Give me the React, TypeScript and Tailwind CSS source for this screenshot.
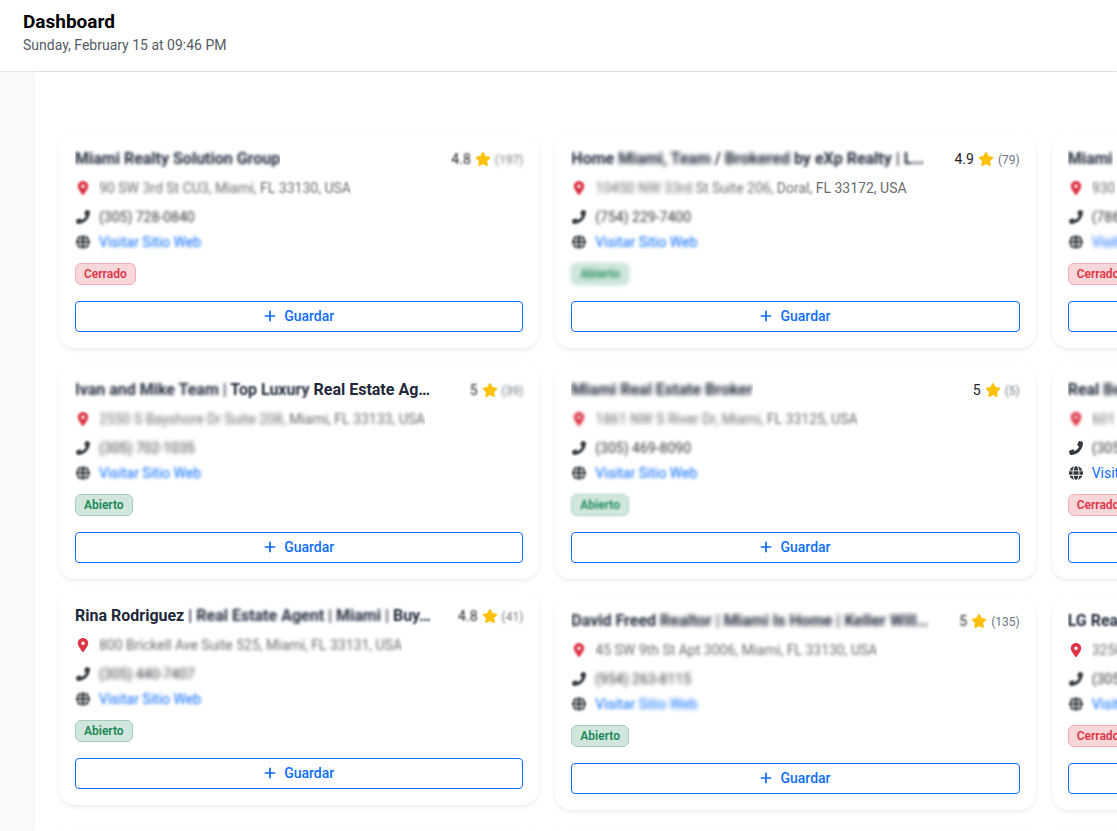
import clsx from 'clsx';
import type { ReactNode } from 'react';
import { FaGlobe, FaLocationDot, FaPhoneFlip, FaPlus, FaStar } from 'react-icons/fa6';

// 0 = sharp, 3 = fully hidden
type Level = 0 | 1 | 2 | 3;
type Part = [text: string, level: Level];

type Listing = {
  name: Part[];
  rating: Part;
  reviews: Part;
  address: Part[];
  phone: Part[];
  website: Part[];
  open: boolean;
  statusBlur?: Level;
  pinBlur?: Level;
  iconBlur?: Level;
  active?: boolean;
};

const listings: Listing[] = [
  {
    name: [['Miami Realty', 2], [' Solution', 2], [' Group', 2]],
    rating: ['4.8', 1],
    reviews: ['(197)', 2],
    address: [['90 SW 3rd St CU3, Miami,', 2], [' FL 33130, USA', 1]],
    phone: [['(305) 728-0840', 2]],
    website: [['Visitar Sitio Web', 2]],
    open: false,
    pinBlur: 1,
    iconBlur: 1,
  },
  {
    name: [['Home ', 2], ['Miami, Team', 3], [' / ', 2], ['Brokered', 3], [' by ', 2], ['eXp Realty | L…', 2]],
    rating: ['4.9', 0],
    reviews: ['(79)', 0],
    address: [['10450 NW 33rd', 3], [' St Suite 206,', 2], [' Doral,', 1], [' FL 33172, USA', 0]],
    phone: [['(754) 229-7400', 2]],
    website: [['Visitar Sitio Web', 2]],
    open: true,
    statusBlur: 3,
    pinBlur: 1,
    iconBlur: 1,
  },
  {
    name: [['Miami', 2]],
    rating: ['5', 0],
    reviews: ['(12)', 0],
    address: [['930', 2]],
    phone: [['(786)', 2]],
    website: [['Visitar Sitio Web', 3]],
    open: false,
    pinBlur: 1,
    iconBlur: 1,
  },
  {
    name: [['Ivan ', 2], ['and Mike Team | ', 2], ['Top Luxury', 1], [' Real Estate Ag…', 0]],
    rating: ['5', 1],
    reviews: ['(39)', 2],
    address: [['2550 S Bayshore Dr Suite 208,', 3], [' Miami,', 2], [' FL 33133, USA', 2]],
    phone: [['(305) 702-1035', 3]],
    website: [['Visitar Sitio Web', 2]],
    open: true,
    pinBlur: 1,
    iconBlur: 1,
  },
  {
    name: [['Miami Real Estate', 3], [' Broker', 3]],
    rating: ['5', 0],
    reviews: ['(5)', 1],
    address: [['1861 NW S River Dr,', 3], [' Miami,', 3], [' FL 33125, USA', 2]],
    phone: [['(305) 469-8090', 2]],
    website: [['Visitar Sitio Web', 2]],
    open: true,
    statusBlur: 1,
    pinBlur: 2,
    iconBlur: 1,
  },
  {
    name: [['Real ', 2], ['Best', 3]],
    rating: ['5', 0],
    reviews: ['(20)', 0],
    address: [['601', 3]],
    phone: [['(305)', 2]],
    website: [['Visitar Sitio Web', 0]],
    open: false,
    pinBlur: 2,
    iconBlur: 0,
  },
  {
    name: [['Rina Rodriguez ', 0], ['| ', 1], ['Real Estate', 2], [' Agent |', 2], [' Miami |', 2], [' Buy…', 1]],
    rating: ['4.8', 1],
    reviews: ['(41)', 1],
    address: [['800 Brickell Ave Suite 525,', 2], [' Miami, FL 33131, USA', 2]],
    phone: [['(305) 440-7407', 3]],
    website: [['Visitar Sitio Web', 2]],
    open: true,
    iconBlur: 1,
    active: true,
  },
  {
    name: [['David Freed ', 2], ['Realtor | Miami Is Home |', 3], [' Keller Will…', 3]],
    rating: ['5', 1],
    reviews: ['(135)', 0],
    address: [['45 SW 9th St Apt 3006, Miami, FL 33130, USA', 2]],
    phone: [['(954) 263-8115', 3]],
    website: [['Visitar ', 2], ['Sitio Web', 3]],
    open: true,
    pinBlur: 1,
    iconBlur: 1,
  },
  {
    name: [['LG ', 1], ['Realty', 1]],
    rating: ['5', 0],
    reviews: ['(31)', 0],
    address: [['3250', 2]],
    phone: [['(305)', 2]],
    website: [['Visitar Sitio Web', 2]],
    open: false,
    iconBlur: 1,
  },
];

const blurClass: Record<Level, string> = {
  0: '',
  1: 'blur-[1px]',
  2: '[filter:blur(1px)_blur(1px)]',
  3: 'blur-[2px]',
};

function Parts({ parts }: { parts: Part[] }) {
  return (
    <>
      {parts.map(([text, level]) => (
        <span key={text} className={blurClass[level]}>
          {text}
        </span>
      ))}
    </>
  );
}

function IconRow({ icon, blur = 0, children }: { icon: ReactNode; blur?: Level; children: ReactNode }) {
  return (
    <div className="flex items-center gap-2">
      <span className={clsx('mb-0.5 flex w-4 shrink-0 justify-center', blurClass[blur])}>{icon}</span>
      {children}
    </div>
  );
}

function ListingCard({ listing }: { listing: Listing }) {
  return (
    <article
      className={clsx(
        'flex min-w-0 flex-col rounded-2xl bg-white p-4 text-sm leading-[21px] shadow-[0_2px_4px_rgba(0,0,0,0.075)]',
        listing.active && '-translate-y-[5px]',
      )}
    >
      <div className="mb-2 flex items-start justify-between">
        <h2 className="max-w-4/5 truncate text-base leading-5 font-bold text-[#1e293b]">
          <Parts parts={listing.name} />
        </h2>
        <div className="flex shrink-0 items-center gap-1 text-[#212529]">
          <span className={blurClass[listing.rating[1]]}>{listing.rating[0]}</span>
          <FaStar className="mb-0.5 h-3.5 w-4 text-[#ffc107]" />
          <span className={clsx('text-xs leading-5 text-[#6c757d]', blurClass[listing.reviews[1]])}>{listing.reviews[0]}</span>
        </div>
      </div>

      <div className="mb-2">
        <IconRow icon={<FaLocationDot className="size-3.5 text-[#dc3545]" />} blur={listing.pinBlur}>
          <span className="truncate text-[#6c6c6c]">
            <Parts parts={listing.address} />
          </span>
        </IconRow>
      </div>
      <div className="mb-1">
        <IconRow icon={<FaPhoneFlip className="size-3.5 text-[#343a40]" />} blur={listing.iconBlur}>
          <span className="text-[#343a40]">
            <Parts parts={listing.phone} />
          </span>
        </IconRow>
      </div>
      <IconRow icon={<FaGlobe className="size-3.5 text-[#343a40]" />} blur={listing.iconBlur}>
        <a href="#" className="text-[#0d6efd]">
          <Parts parts={listing.website} />
        </a>
      </IconRow>

      <span
        className={clsx(
          'mt-2.5 mb-4 self-start rounded-md border px-2 text-xs leading-5 font-semibold',
          listing.open ? 'border-[#a3cfbb] bg-[#d1e7dd] text-[#198754]' : 'border-[#f1aeb5] bg-[#f8d7da] text-[#dc3545]',
          blurClass[listing.statusBlur ?? 0],
        )}
      >
        {listing.open ? 'Abierto' : 'Cerrado'}
      </span>

      <button
        type="button"
        className="flex w-full items-center justify-center gap-2 rounded border border-[#0d6efd] py-1 font-medium text-[#0d6efd]"
      >
        <FaPlus className="mb-0.5 h-3.5 w-3" />
        Guardar
      </button>
    </article>
  );
}

export default function App() {
  return (
    <div className="flex h-screen flex-col overflow-hidden bg-[#f8fafc] font-[Roboto,sans-serif]">
      <header className="border-b border-[#e2e8f0] bg-white px-[23px] pt-2 pb-4">
        <h1 className="text-[19px] leading-7 font-bold text-black">Dashboard</h1>
        <p className="text-sm leading-[19px] text-[#555b64]">Sunday, February 15 at 09:46 PM</p>
      </header>

      <div className="min-h-0 flex-1 pl-[35px]">
        <main className="h-full overflow-hidden bg-white pt-[61px] pl-6 shadow-[0_0_4px_rgba(0,0,0,0.06)]">
          <div className="grid grid-cols-[repeat(3,45.4%)] gap-4">
            {listings.map((listing) => (
              <ListingCard key={listing.phone[0][0] + listing.address[0][0]} listing={listing} />
            ))}
            {[0, 1, 2].map((slot) => (
              <div key={slot} className="h-52 rounded-2xl bg-white shadow-[0_2px_4px_rgba(0,0,0,0.075)]" />
            ))}
          </div>
        </main>
      </div>
    </div>
  );
}
